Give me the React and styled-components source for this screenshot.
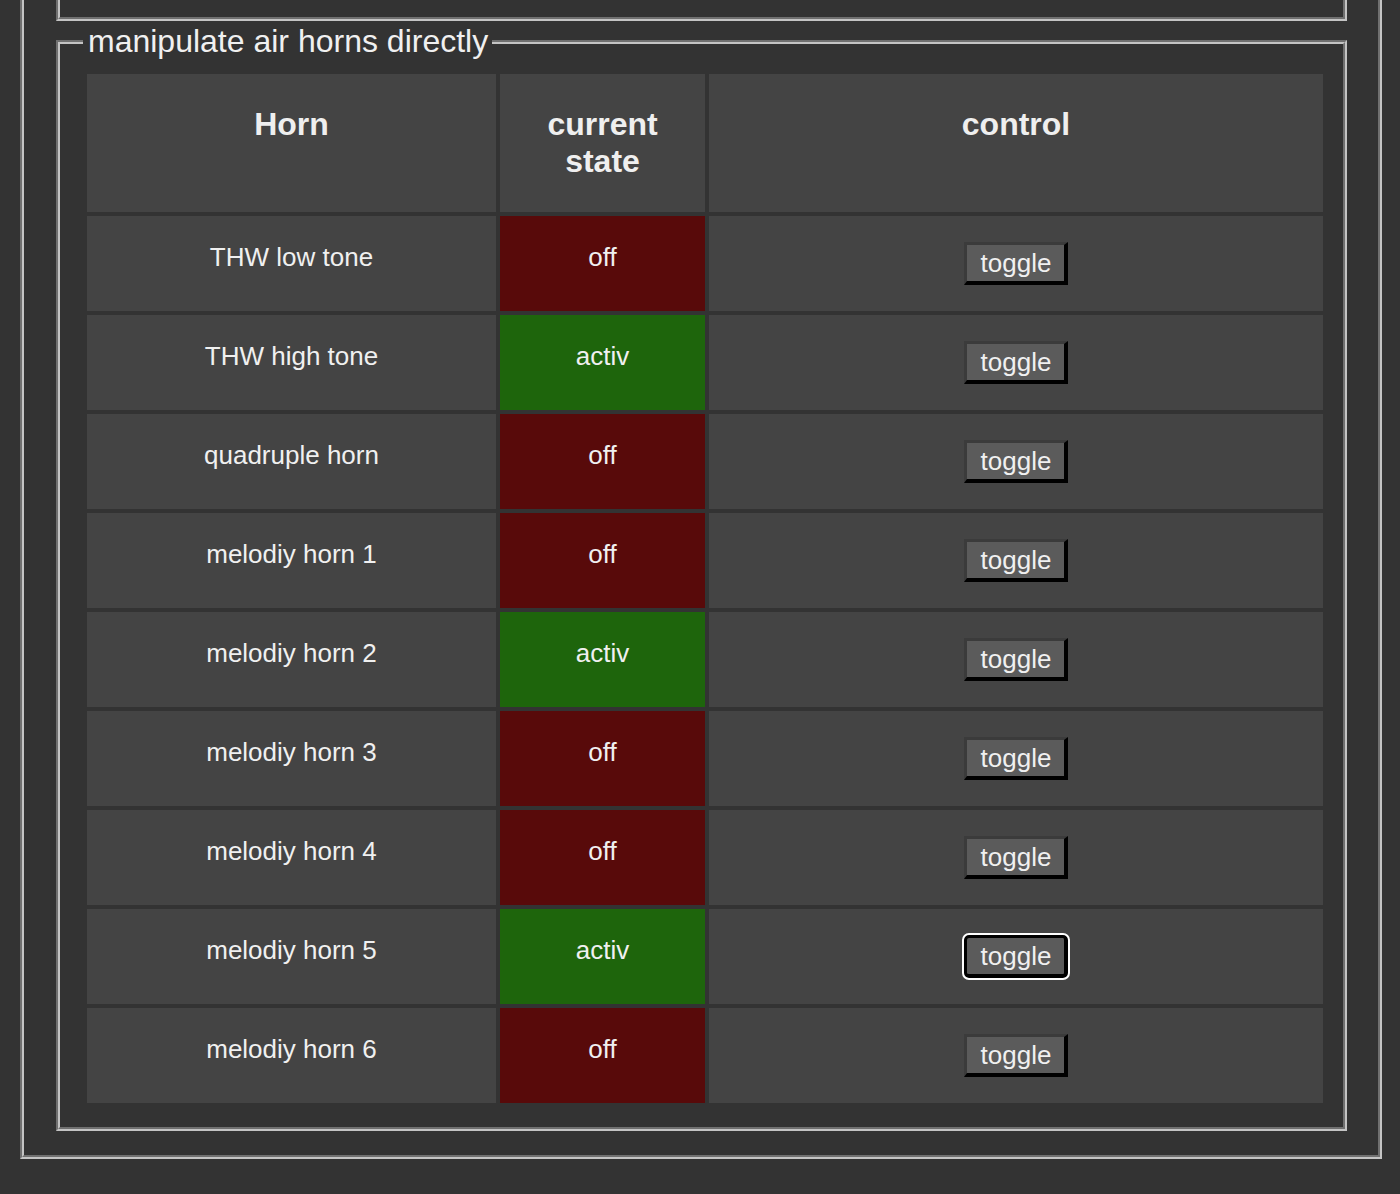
import React from "react";
import styled, { createGlobalStyle } from "styled-components";

const GlobalStyle = createGlobalStyle`
  html, body {
    margin: 0;
    padding: 0;
    background: #333333;
    height: 1194px;
    overflow: hidden;
  }
  body {
    font-family: "Liberation Sans", Arial, sans-serif;
    color: #efefef;
  }
`;

const Page = styled.div`
  margin-top: -60px;
  padding: 0 18px 0 20px;
`;

const OuterSet = styled.fieldset`
  margin: 0;
  padding: 0 31px 24px 32px;
  border: 4px groove #c4c4c4;
  min-inline-size: 0;
`;

const PrevSet = styled.fieldset`
  box-sizing: border-box;
  height: 77px;
  margin: 0;
  padding: 0;
  border: 4px groove #c4c4c4;
  border-top: none;
`;

const HornSet = styled.fieldset`
  margin: 2px 0 0;
  padding: 10px 16px 20px 23px;
  border: 4px groove #c4c4c4;
  min-inline-size: 0;
`;

const Legend = styled.legend`
  padding: 0 4px 0 5px;
  font-size: 32px;
  line-height: 37px;
  color: #f0f0f0;
`;

const Table = styled.table`
  width: 1244px;
  table-layout: fixed;
  border-collapse: separate;
  border-spacing: 4px;
`;

const HeadCell = styled.th`
  background: #444444;
  padding: 32px 8px;
  font-size: 32px;
  line-height: 37px;
  font-weight: bold;
  text-align: center;
  vertical-align: top;
  color: #efefef;
`;

const Cell = styled.td`
  background: ${(p) =>
    p.$state === "off" ? "#580a0a" : p.$state === "activ" ? "#1e650c" : "#444444"};
  padding: 26px 8px;
  font-size: 26px;
  line-height: 30px;
  text-align: center;
  vertical-align: top;
  color: #f0f0f0;
`;

const ToggleButton = styled.button`
  display: inline-block;
  vertical-align: top;
  margin: 0;
  padding: 3px 13px 3px 14px;
  font-family: "Liberation Sans", Arial, sans-serif;
  font-size: 26px;
  line-height: 30px;
  color: #f0f0f0;
  background: #5b5b5b;
  border-style: solid;
  border-width: 3px 4px 4px 3px;
  border-color: ${(p) => (p.$focused ? "#000" : "#3b3b3b #000 #000 #3b3b3b")};
  border-radius: ${(p) => (p.$focused ? "5px" : "0")};
  outline: ${(p) => (p.$focused ? "2px solid #ffffff" : "none")};
  outline-offset: 0;
  cursor: pointer;
`;

const horns = [
  { name: "THW low tone", state: "off" },
  { name: "THW high tone", state: "activ" },
  { name: "quadruple horn", state: "off" },
  { name: "melodiy horn 1", state: "off" },
  { name: "melodiy horn 2", state: "activ" },
  { name: "melodiy horn 3", state: "off" },
  { name: "melodiy horn 4", state: "off" },
  { name: "melodiy horn 5", state: "activ", focused: true },
  { name: "melodiy horn 6", state: "off" },
];

export default function App() {
  return (
    <>
      <GlobalStyle />
      <Page>
        <OuterSet>
          <PrevSet />
          <HornSet>
            <Legend>manipulate air horns directly</Legend>
            <Table>
              <colgroup>
                <col style={{ width: 409 }} />
                <col style={{ width: 205 }} />
                <col style={{ width: 614 }} />
              </colgroup>
              <thead>
                <tr>
                  <HeadCell>Horn</HeadCell>
                  <HeadCell>
                    current
                    <br />
                    state
                  </HeadCell>
                  <HeadCell>control</HeadCell>
                </tr>
              </thead>
              <tbody>
                {horns.map((h) => (
                  <tr key={h.name}>
                    <Cell>{h.name}</Cell>
                    <Cell $state={h.state}>{h.state}</Cell>
                    <Cell>
                      <ToggleButton $focused={h.focused}>toggle</ToggleButton>
                    </Cell>
                  </tr>
                ))}
              </tbody>
            </Table>
          </HornSet>
        </OuterSet>
      </Page>
    </>
  );
}
